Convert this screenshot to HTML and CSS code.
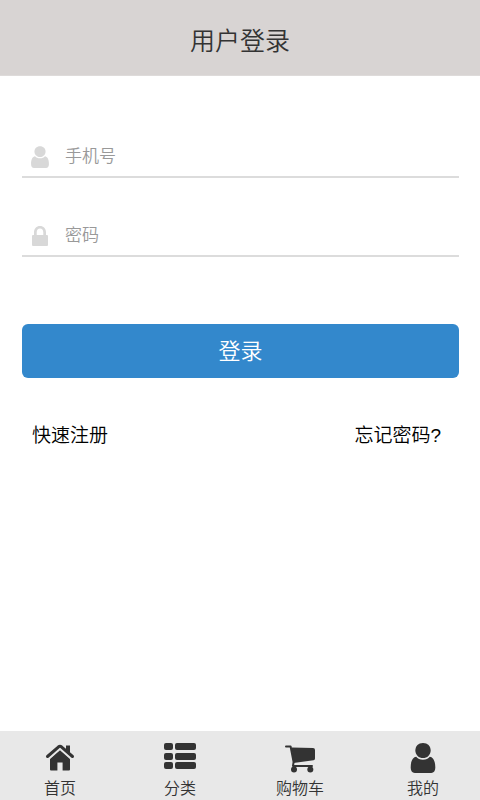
FILE: index.html
```html
<!DOCTYPE html>
<html lang="zh-CN">
<head>
<meta charset="utf-8">
<meta name="viewport" content="width=device-width, initial-scale=1">
<title>用户登录</title>
<link rel="stylesheet" href="styles.css">
</head>
<body>
<svg class="symbols" aria-hidden="true">
  <symbol id="user" viewBox="0 0 24 29">
    <path d="M12 0C16.500 0 19.400 3 19.400 7.200C19.400 11.400 16 14.600 12 14.600C8 14.600 4.600 11.400 4.600 7.200C4.600 3 7.500 0 12 0Z"/>
    <path d="M5.400 13.400C7 15.300 9 16.200 12 16.200C15 16.200 17 15.300 18.600 13.400C21.500 13.800 24 17 23.900 24C23.900 27 22.500 29 20 29H4C1.500 29 .1 27 .1 24C0 17 2.500 13.800 5.400 13.400Z"/>
  </symbol>
</svg>
<header class="header"><h1 class="title">用户登录</h1></header>
<main class="main">
  <form class="form">
    <div class="field">
      <label for="phone" aria-label="手机号"><svg class="field-icon"><use href="#user"/></svg></label>
      <input class="input" id="phone" type="tel" placeholder="手机号">
    </div>
    <div class="field">
      <label for="password" aria-label="密码"><svg class="field-icon" viewBox="0 0 17 22"><path fill-rule="evenodd" d="M2.500 10V7.500C2.500 3.500 5 1 8.500 1S14.500 3.500 14.500 7.500V10H15.500Q16.500 10 16.500 11V20Q16.500 21 15.500 21H1.500Q.5 21 .5 20V11Q.5 10 1.500 10ZM5.200 10H11.800V7.500C11.800 5 10.500 3.600 8.500 3.600S5.200 5 5.200 7.500Z"/></svg></label>
      <input class="input" id="password" type="password" placeholder="密码">
    </div>
    <button class="submit" type="submit">登录</button>
  </form>
  <div class="links">
    <a class="link" href="#register">快速注册</a>
    <a class="link" href="#forgot">忘记密码?</a>
  </div>
</main>
<nav class="nav">
  <a class="tab" href="#home">
    <svg class="tab-icon" viewBox="0 0 32 30"><path d="M6 16L16 7.200L26 16V26.500Q26 27.500 25 27.500H18.600V19.500H13.400V27.500H7Q6 27.500 6 26.500Z"/><path d="M22 2.500H26V12L22 8Z"/><path class="gap" d="M3.500 15.500L16 4.500L28.500 15.500"/><path class="roof" d="M3.500 13.500L14.600 3.800Q16 2.700 17.400 3.800L28.500 13.500"/></svg>
    首页
  </a>
  <a class="tab" href="#category">
    <svg class="tab-icon" viewBox="0 0 32 30"><rect width="9" height="7" rx="2"/><rect x="11" width="21" height="7" rx="2"/><rect y="10" width="9" height="7" rx="2"/><rect x="11" y="10" width="21" height="7" rx="2"/><rect y="19" width="9" height="7" rx="2"/><rect x="11" y="19" width="21" height="7" rx="2"/></svg>
    分类
  </a>
  <a class="tab" href="#cart">
    <svg class="tab-icon" viewBox="0 0 32 30"><path d="M7.500 4.600L29 5Q31 5 31 7V15.500Q31 17 29.500 17.200L9.500 20Z"/><path class="rail" d="M2 3.500H6.600L9.600 19L9 23H28"/><circle cx="10" cy="26.500" r="3"/><circle cx="26.300" cy="26.500" r="3"/></svg>
    购物车
  </a>
  <a class="tab" href="#me">
    <svg class="tab-icon"><use href="#user"/></svg>
    我的
  </a>
</nav>
</body>
</html>
```
FILE: styles.css
```css
* { box-sizing: border-box; }

body {
  margin: 0;
  min-height: 100vh;
  display: flex;
  flex-direction: column;
  background: #fff;
  color: #333;
  font-family: "Noto Sans CJK SC", sans-serif;
  font-weight: 350;
}

.symbols { position: absolute; width: 0; height: 0; }

.header {
  padding: 21px 0 18px;
  background: #d8d4d3;
  border-bottom: 1px solid #dedbda;
  text-align: center;
}

.title {
  margin: 0;
  font-size: 25px;
  line-height: 36px;
  font-weight: 350;
}

.main { flex: 1; padding: 55px 21px 0 22px; }

.field {
  display: flex;
  align-items: center;
  height: 47px;
  padding: 2px 9px 0;
  border-bottom: 2px solid #dcdcdc;
}

.field + .field { margin-top: 32px; }

.field label { display: flex; }

.field-icon {
  width: 18px;
  height: 22px;
  margin-top: 4px;
  fill: #d8d8d8;
}

.input {
  flex: 1;
  min-width: 0;
  margin-left: 16px;
  padding: 0;
  border: 0;
  outline: 0;
  background: none;
  color: #333;
  font: inherit;
  font-size: 17px;
  line-height: 26px;
}

.input::placeholder { color: #999; opacity: 1; }

.submit {
  display: block;
  width: 100%;
  height: 54px;
  margin-top: 67px;
  padding: 0 0 4px;
  border: 0;
  border-radius: 6px;
  background: #3388cc;
  color: #fff;
  font: inherit;
  font-size: 22px;
}

.links {
  display: flex;
  justify-content: space-between;
  padding: 44px 18px 0 10px;
}

.link {
  color: #000;
  font-family: "Liberation Sans", "Noto Sans CJK SC", sans-serif;
  font-size: 19px;
  line-height: 28px;
  text-decoration: none;
}

.nav {
  display: grid;
  grid-template-columns: repeat(4, 1fr);
  padding: 12px 0 1px;
  background: #e8e8e8;
}

.tab {
  display: flex;
  flex-direction: column;
  align-items: center;
  gap: 2px;
  color: #333;
  font-size: 16px;
  line-height: 24px;
  text-decoration: none;
}

.tab:last-child { padding-left: 6px; }

.tab-icon { width: 32px; height: 30px; fill: #333; }

.roof,
.gap,
.rail { fill: none; stroke: #333; stroke-width: 2; stroke-linecap: round; stroke-linejoin: round; }

.roof { stroke-width: 3; }

.gap { stroke: #e8e8e8; stroke-width: 3; }
```
